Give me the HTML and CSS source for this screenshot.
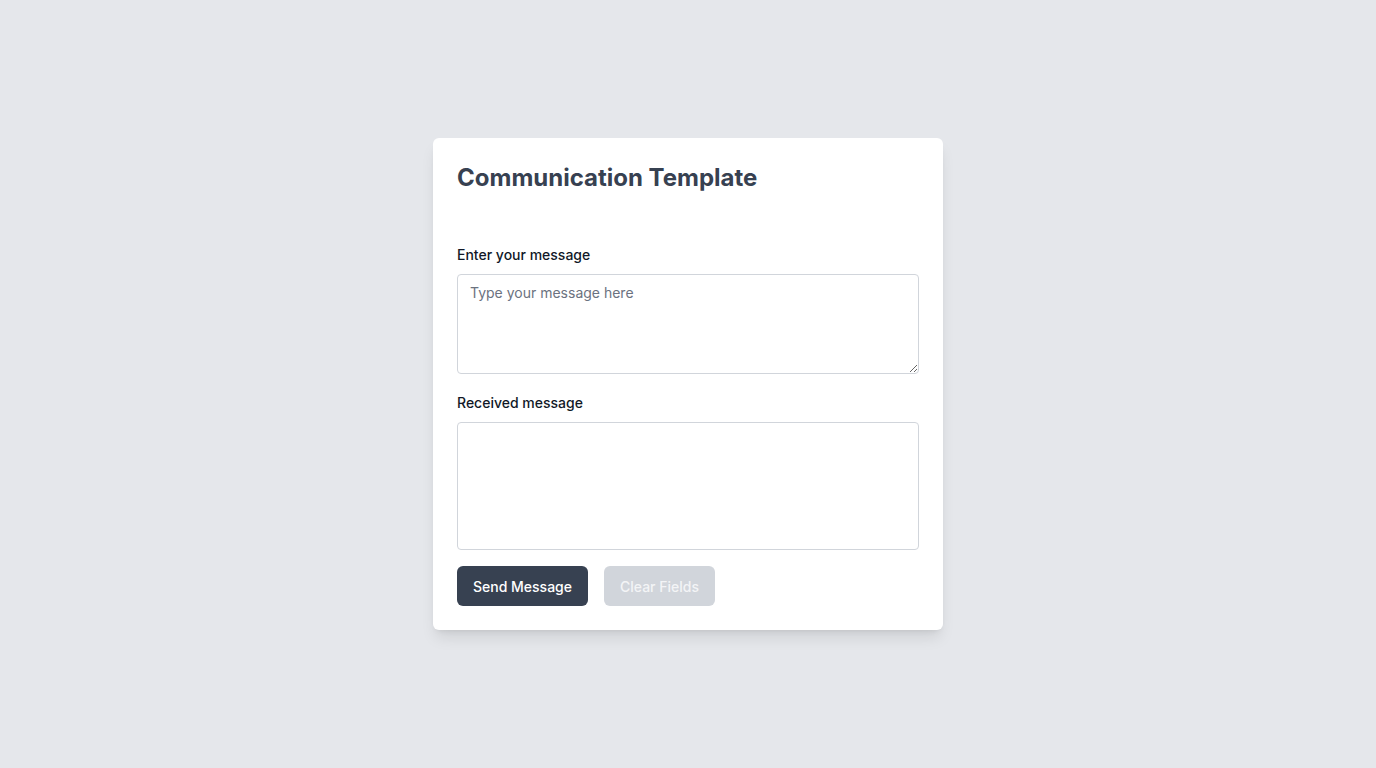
FILE: index.html
```html
<!DOCTYPE html>
<html lang="en">
<head>
<meta charset="utf-8">
<title>Communication Template</title>
<link rel="stylesheet" href="styles.css">
</head>
<body>
<main class="card">
  <h1 class="title">Communication Template</h1>
  <label class="label" for="msg">Enter your message</label>
  <textarea id="msg" class="field field-input" placeholder="Type your message here"></textarea>
  <label class="label" for="recv">Received message</label>
  <div id="recv" class="field field-output"></div>
  <div class="actions">
    <button class="btn btn-primary">Send Message</button>
    <button class="btn btn-disabled" disabled>Clear Fields</button>
  </div>
</main>
</body>
</html>
```
FILE: styles.css
```css
* { box-sizing: border-box; }
html, body { height: 100%; }
body {
  margin: 0;
  background: #e5e7eb;
  font-family: Inter, "Noto Sans", sans-serif;
  display: flex;
  align-items: center;
  justify-content: center;
}
.card {
  width: 510px;
  background: #fff;
  border-radius: 6px;
  padding: 24px;
  box-shadow: 0 10px 15px -3px rgba(0,0,0,0.1), 0 4px 6px -4px rgba(0,0,0,0.1);
  display: flex;
  flex-direction: column;
}
.title {
  margin: 0 0 51px;
  font-size: 24px;
  line-height: 32px;
  font-weight: 700;
  color: #374151;
}
.label {
  display: block;
  font-size: 14px;
  line-height: 20px;
  font-weight: 500;
  color: #111827;
  margin-bottom: 9px;
}
.field {
  display: block;
  width: 100%;
  border: 1px solid #d1d5db;
  border-radius: 4px;
  background: #fff;
  font-family: inherit;
  font-size: 14px;
  line-height: 20px;
  color: #111827;
  padding: 8px 12px;
}
.field-input {
  height: 100px;
  margin-bottom: 19px;
  resize: vertical;
  outline: none;
}
.field-input::placeholder { color: #6b7280; }
.field-output {
  height: 128px;
  margin-bottom: 16px;
}
.actions {
  display: flex;
  gap: 16px;
}
.btn {
  height: 40px;
  padding: 0 16px;
  border: none;
  border-radius: 6px;
  font-family: inherit;
  font-size: 14px;
  font-weight: 500;
}
.btn-primary { background: #374151; color: #fff; }
.btn-disabled { background: #d1d5db; color: #f3f4f6; }
```
